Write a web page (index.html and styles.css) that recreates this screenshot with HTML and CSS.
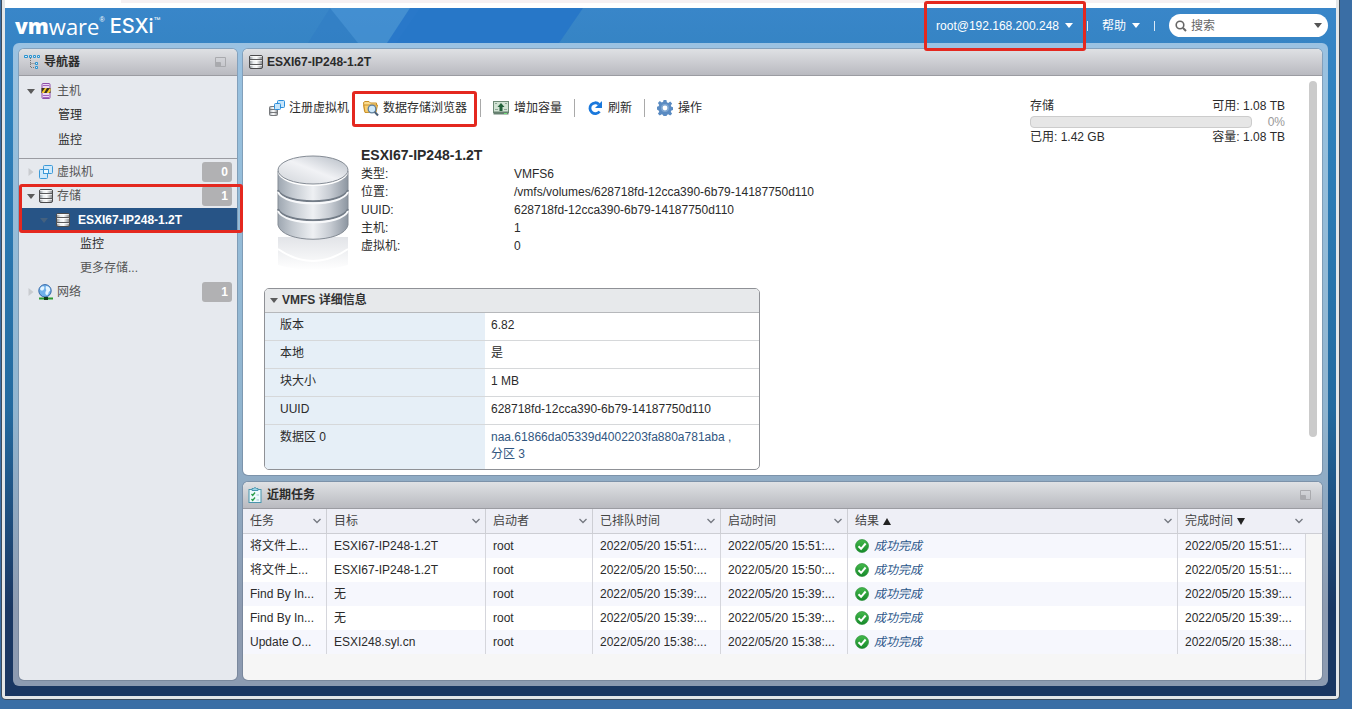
FILE: index.html
```html
<!DOCTYPE html>
<html lang="zh-CN">
<head>
<meta charset="utf-8">
<title>VMware ESXi</title>
<link rel="stylesheet" href="styles.css">
</head>
<body>
<svg class="defs" aria-hidden="true">
  <defs>
    <linearGradient id="metal"><stop offset="0" stop-color="#8b9096"/><stop offset=".3" stop-color="#e9ecee"/><stop offset=".55" stop-color="#fafafa"/><stop offset="1" stop-color="#85898e"/></linearGradient>
    <linearGradient id="steel"><stop offset="0" stop-color="#9ea7b1"/><stop offset=".2" stop-color="#c3c9d0"/><stop offset=".5" stop-color="#eef0f3"/><stop offset=".75" stop-color="#c5cad1"/><stop offset="1" stop-color="#8d96a1"/></linearGradient>
    <linearGradient id="lid" x1="0" y1="1" x2="1" y2="0"><stop offset="0" stop-color="#d0d4d9"/><stop offset=".5" stop-color="#f1f2f5"/><stop offset="1" stop-color="#b3bac3"/></linearGradient>
    <linearGradient id="mirror" x1="0" y1="0" x2="0" y2="1"><stop offset="0" stop-color="#e2e4e8"/><stop offset="1" stop-color="#ffffff"/></linearGradient>
    <linearGradient id="green" x1="0" y1="0" x2="0" y2="1"><stop offset="0" stop-color="#45b94c"/><stop offset="1" stop-color="#168a2a"/></linearGradient>
    <symbol id="i-disk" viewBox="0 0 16 16"><rect x="1.500" y="1.500" width="13" height="13" rx="1.500" fill="url(#metal)" stroke="#4b4b4d"/><path d="M1.500 5.500h13M1.500 10.500h13" stroke="#5b5b5d"/><path d="M2 2.500h12M2 6.500h12M2 11.500h12" stroke="#fff" stroke-opacity=".7"/></symbol>
    <symbol id="i-vm" viewBox="0 0 16 16"><g fill="#cfe9fb" stroke="#3d9ad8"><rect x="5.500" y="1.500" width="9" height="8" rx="1"/><rect x="1.500" y="5.500" width="8" height="9" rx="1"/><rect x="5.500" y="5.500" width="5" height="4" fill="#eff9ff"/></g></symbol>
    <symbol id="i-ok" viewBox="0 0 14 14"><circle cx="7" cy="7" r="6.500" fill="url(#green)" stroke="#178427" stroke-width=".6"/><path d="M3.500 7.200l2.600 2.600 4.500-5.300" fill="none" stroke="#fff" stroke-width="2"/></symbol>
    <symbol id="i-chev" viewBox="0 0 10 6"><path d="M1.500 1l3.500 3.500L8.500 1" fill="none" stroke="#747880" stroke-width="1.300"/></symbol>
    <symbol id="i-tri" viewBox="0 0 8 5"><path d="M0 0h8L4 5z" fill="currentColor"/></symbol>
    <symbol id="i-win" viewBox="0 0 11 10"><path d="M.5.500h10v9H.5zM.5 5.500h5v4" fill="none" stroke="#a9aaae"/><path d="M1 6h4v3H1z" fill="#a9aaae"/></symbol>
  </defs>
</svg>
<div class="window">
  <div class="browser-edge"></div>
  <div class="app">
    <header class="topbar">
      <svg class="facets" viewBox="0 0 600 35" width="600" height="35" aria-hidden="true">
        <path d="M320 0l-22 35h50z" fill="#2e78c2" opacity=".4"/><path d="M320 0h90l-24 35h-38z" fill="#4d98da" opacity=".5"/>
        <path d="M400 0l-23 35h172l24-35z" fill="#2474c8" opacity=".85"/>
      </svg>
      <h1 class="brand"><span class="brand-vm">vm</span><span class="brand-ware">ware</span><sup>®</sup><span class="brand-esxi">ESXi</span><sup>™</sup></h1>
      <div class="user-tools">
        <button class="top-button account" type="button">root@192.168.200.248<svg width="8" height="5"><use href="#i-tri"/></svg><span class="mark mark-account"></span></button>
        <span class="bar"></span>
        <button class="top-button" type="button">帮助<svg width="8" height="5"><use href="#i-tri"/></svg></button>
        <span class="bar"></span>
        <div class="search">
          <svg width="12" height="12" viewBox="0 0 12 12" aria-hidden="true"><circle cx="5" cy="5" r="3.800" fill="none" stroke="#666" stroke-width="1.600"/><path d="M8 8l3 3" stroke="#666" stroke-width="2"/></svg>
          <input type="text" placeholder="搜索" aria-label="搜索">
          <svg width="8" height="5" aria-hidden="true"><use href="#i-tri"/></svg>
        </div>
      </div>
    </header>
    <div class="shell">
      <nav class="panel nav">
        <div class="panel-head">
          <svg width="17" height="16" viewBox="0 0 17 16" aria-hidden="true"><g fill="#d7effc" stroke="#2d93cf"><path d="M.5 1.500h3v2h-3zM5.500 1.500h2v2h-2zM9.500 1.500h2v2h-2zM13.500 1.500h2v2h-2zM11.500 8.500h2v2h-2zM11.500 12.500h2v2h-2z"/></g><path d="M6.500 4v9.500H11M6.500 9.500H11" fill="none" stroke="#777" stroke-dasharray="1 1"/></svg>
          <h2>导航器</h2>
          <button class="win-button" type="button" aria-label="收起"><svg width="11" height="10"><use href="#i-win"/></svg></button>
        </div>
        <ul class="tree host-tree">
          <li><a class="node" href="#"><svg class="caret" width="8" height="5"><use href="#i-tri"/></svg>
            <svg width="16" height="16" viewBox="0 0 16 16"><rect x="4" y=".5" width="8" height="15" rx="1" fill="#ead7f2" stroke="#8e4fa8"/><path d="M5 2.500h6M5 12.500h6M5 14.500h6" stroke="#a565bd"/><path d="M3.500 5h9v5h-9z" fill="#3a3222"/><path d="M4 9l3-4h2L6 10H4zM8.500 10l3-4.500h1V8L11 10z" fill="#f4c928"/></svg>
            <span>主机</span></a></li>
          <li><a class="leaf" href="#">管理</a></li>
          <li><a class="leaf" href="#">监控</a></li>
        </ul>
        <ul class="tree object-tree">
          <li><a class="node" href="#"><svg class="caret faint" width="5" height="8" viewBox="0 0 5 8"><path d="M0 0v8l5-4z" fill="currentColor"/></svg><svg width="16" height="16"><use href="#i-vm"/></svg><span>虚拟机</span><b class="count">0</b></a></li>
          <li class="storage">
            <a class="node" href="#"><svg class="caret" width="8" height="5"><use href="#i-tri"/></svg><svg width="16" height="16"><use href="#i-disk"/></svg><span>存储</span><b class="count">1</b></a>
            <a class="node selected" href="#"><svg class="caret" width="8" height="5"><use href="#i-tri"/></svg><svg width="16" height="16"><use href="#i-disk"/></svg><span>ESXI67-IP248-1.2T</span></a>
            <span class="mark mark-storage"></span>
          </li>
          <li><a class="leaf deep" href="#">监控</a></li>
          <li><a class="leaf deep more" href="#">更多存储...</a></li>
          <li><a class="node" href="#"><svg class="caret faint" width="5" height="8" viewBox="0 0 5 8"><path d="M0 0v8l5-4z" fill="currentColor"/></svg><svg width="16" height="16" viewBox="0 0 16 16"><circle cx="7" cy="6.800" r="6.200" fill="#6fb0ea" stroke="#3467a8"/><path d="M3 3c3-2 4 0 3 2S3 7 2 5zM8 2c3 0 5 3 4 5-2 0-1 4-3 4S7 8 8 7s-1-2 0-5z" fill="#e3f4ff"/><path d="M1 14.500h14" stroke="#2b9b32" stroke-width="2"/><path d="M6 14.500h4" stroke="#123f18" stroke-width="3"/></svg><span>网络</span><b class="count">1</b></a></li>
        </ul>
      </nav>
      <div class="workspace">
        <main class="panel detail">
          <div class="panel-head"><svg width="16" height="16"><use href="#i-disk"/></svg><h2>ESXI67-IP248-1.2T</h2></div>
          <div class="detail-body">
            <div class="detail-top">
              <div class="toolbar">
                <button type="button"><svg width="16" height="18" viewBox="0 0 16 18"><rect x=".5" y="7.500" width="8" height="9" rx="1" fill="url(#metal)" stroke="#77797c"/><path d="M1 10.500h7M1 13.500h7" stroke="#77797c"/><g fill="#c6e5fb" stroke="#2c8edb"><rect x="8.500" y="1.500" width="7" height="7" rx="1"/><rect x="5.500" y="4.500" width="6" height="6" rx="1"/></g></svg>注册虚拟机</button>
                <button class="browse" type="button"><svg width="16" height="18" viewBox="0 0 16 18"><path d="M1.500 12.500l-1-9 1.500-1h4l1.500 1.500h6v2" fill="#fbdc8e" stroke="#c98f25"/><path d="M2 13.500L.8 6h13.700l-1.500 7z" fill="#f9cf72" stroke="#c98f25"/><circle cx="9" cy="10" r="3.800" fill="#cfe9fb" stroke="#5e7f9e" stroke-width="1.300"/><path d="M11.800 13l3.200 3.500" stroke="#4b5f75" stroke-width="2"/></svg>数据存储浏览器<span class="mark mark-browse"></span></button>
                <button class="divided" type="button"><svg width="16" height="16" viewBox="0 0 16 16"><rect x=".5" y="1.500" width="15" height="11" fill="#d2e3d4" stroke="#6d8a76"/><path d="M.5 11.500h15v3H.5z" fill="#668070"/><path d="M8 3l3.500 4h-2v4h-3V7h-2z" fill="#22613a"/><path d="M2 3.500h2m8 0h2M2 9.500h3m6 0h3" stroke="#8ca896"/><path d="M11 13.500h3" stroke="#6fe078"/></svg>增加容量</button>
                <button class="divided" type="button"><svg width="16" height="16" viewBox="0 0 16 16"><path d="M12 4.200A5.400 5.400 0 1 0 12.600 11.500" fill="none" stroke="#1a78dc" stroke-width="2.800"/><path d="M15 1v7H8z" fill="#1a78dc"/></svg>刷新</button>
                <button class="divided" type="button"><svg width="16" height="16" viewBox="0 0 16 16"><path d="M6.600 0h2.800l.5 2.300 1.300.6 2-1.300 1.900 1.900-1.300 2 .6 1.300 2.100.5v2.600l-2.100.5-.6 1.300 1.300 2-1.900 1.900-2-1.300-1.300.6-.5 2.100H6.600l-.5-2.100-1.300-.6-2 1.300-1.900-1.900 1.300-2-.6-1.300L0 9.400V6.800l1.600-.5.6-1.300-1.300-2 1.900-1.900 2 1.300 1.300-.6z" fill="#5a8bc2"/><circle cx="8" cy="8" r="4" fill="#7fa7d2"/><circle cx="8" cy="8" r="2.400" fill="#fff"/></svg>操作</button>
              </div>
              <section class="capacity">
                <div class="cap-line"><span>存储</span><span>可用: 1.08 TB</span></div>
                <div class="cap-meter"><div class="track"></div><span>0%</span></div>
                <div class="cap-line"><span>已用: 1.42 GB</span><span>容量: 1.08 TB</span></div>
              </section>
            </div>
            <section class="summary">
              <svg width="72" height="114" viewBox="0 0 72 114" aria-hidden="true">
                <path d="M1 82v28q35 10 70 0V82z" fill="url(#mirror)"/><path d="M1 94q35 24 70 0" fill="none" stroke="#fff" stroke-width="2"/>
                <path d="M1 16v54c4 19 66 19 70 0V16z" fill="url(#steel)" stroke="#858c95"/>
                <path d="M1 35c6 15 64 15 70 0M1 54c6 15 64 15 70 0" fill="none" stroke="#737c87" stroke-width="2"/>
                <path d="M1 37c6 15 64 15 70 0M1 56c6 15 64 15 70 0" fill="none" stroke="#f8f9fb" stroke-width="2"/>
                <ellipse cx="36" cy="17" rx="35" ry="14" fill="#fff"/><ellipse cx="36" cy="15" rx="35" ry="14" fill="url(#lid)" stroke="#858c95"/>
              </svg>
              <div class="facts-box">
                <h3>ESXI67-IP248-1.2T</h3>
                <dl class="facts">
                  <dt>类型:</dt><dd>VMFS6</dd>
                  <dt>位置:</dt><dd>/vmfs/volumes/628718fd-12cca390-6b79-14187750d110</dd>
                  <dt>UUID:</dt><dd>628718fd-12cca390-6b79-14187750d110</dd>
                  <dt>主机:</dt><dd>1</dd>
                  <dt>虚拟机:</dt><dd>0</dd>
                </dl>
              </div>
            </section>
            <section class="card">
              <h3><button type="button"><svg width="8" height="5"><use href="#i-tri"/></svg>VMFS 详细信息</button></h3>
              <table>
                <tr><th scope="row">版本</th><td>6.82</td></tr>
                <tr><th scope="row">本地</th><td>是</td></tr>
                <tr><th scope="row">块大小</th><td>1 MB</td></tr>
                <tr><th scope="row">UUID</th><td>628718fd-12cca390-6b79-14187750d110</td></tr>
                <tr><th scope="row">数据区 0</th><td><a href="#">naa.61866da05339d4002203fa880a781aba ,<br>分区 3</a></td></tr>
              </table>
            </section>
            <div class="scroll-thumb"></div>
          </div>
        </main>
        <section class="panel tasks">
          <div class="panel-head">
            <svg width="14" height="16" viewBox="0 0 14 16" aria-hidden="true"><rect x="1" y="2.500" width="12" height="13" fill="#eefafd" stroke="#4995ad"/><path d="M4 3.500V1.500h1.500L7 .5l1.500 1H10v2z" fill="#9cd7ea" stroke="#4995ad"/><path d="M3.500 7l1.200 1.500L7 5.500M3.500 12l1.200 1.500L7 10.500" fill="none" stroke="#279c47" stroke-width="1.300"/><path d="M8.500 8h2.500M8.500 13h2.500" stroke="#9fc3cf"/></svg>
            <h2>近期任务</h2>
            <button class="win-button" type="button" aria-label="还原"><svg width="11" height="10"><use href="#i-win"/></svg></button>
          </div>
          <table class="grid">
            <colgroup><col class="c-task"><col class="c-target"><col class="c-user"><col class="c-queue"><col class="c-start"><col><col class="c-done"><col class="c-gutter"></colgroup>
            <thead><tr>
              <th><button type="button">任务<svg width="10" height="6"><use href="#i-chev"/></svg></button></th>
              <th><button type="button">目标<svg width="10" height="6"><use href="#i-chev"/></svg></button></th>
              <th><button type="button">启动者<svg width="10" height="6"><use href="#i-chev"/></svg></button></th>
              <th><button type="button">已排队时间<svg width="10" height="6"><use href="#i-chev"/></svg></button></th>
              <th><button type="button">启动时间<svg width="10" height="6"><use href="#i-chev"/></svg></button></th>
              <th><button type="button">结果<i class="sort up"></i><svg width="10" height="6"><use href="#i-chev"/></svg></button></th>
              <th colspan="2" class="last"><button type="button">完成时间<i class="sort down"></i><svg width="10" height="6"><use href="#i-chev"/></svg></button></th>
            </tr></thead>
            <tbody>
              <tr><td>将文件上...</td><td>ESXI67-IP248-1.2T</td><td>root</td><td>2022/05/20 15:51:...</td><td>2022/05/20 15:51:...</td><td><span class="result"><svg width="14" height="14"><use href="#i-ok"/></svg><em>成功完成</em></span></td><td>2022/05/20 15:51:...</td><td class="gutter"></td></tr>
              <tr><td>将文件上...</td><td>ESXI67-IP248-1.2T</td><td>root</td><td>2022/05/20 15:50:...</td><td>2022/05/20 15:50:...</td><td><span class="result"><svg width="14" height="14"><use href="#i-ok"/></svg><em>成功完成</em></span></td><td>2022/05/20 15:51:...</td><td class="gutter"></td></tr>
              <tr><td>Find By In...</td><td>无</td><td>root</td><td>2022/05/20 15:39:...</td><td>2022/05/20 15:39:...</td><td><span class="result"><svg width="14" height="14"><use href="#i-ok"/></svg><em>成功完成</em></span></td><td>2022/05/20 15:39:...</td><td class="gutter"></td></tr>
              <tr><td>Find By In...</td><td>无</td><td>root</td><td>2022/05/20 15:39:...</td><td>2022/05/20 15:39:...</td><td><span class="result"><svg width="14" height="14"><use href="#i-ok"/></svg><em>成功完成</em></span></td><td>2022/05/20 15:39:...</td><td class="gutter"></td></tr>
              <tr><td>Update O...</td><td>ESXI248.syl.cn</td><td>root</td><td>2022/05/20 15:38:...</td><td>2022/05/20 15:38:...</td><td><span class="result"><svg width="14" height="14"><use href="#i-ok"/></svg><em>成功完成</em></span></td><td>2022/05/20 15:38:...</td><td class="gutter"></td></tr>
            </tbody>
          </table>
          <div class="rest"><div class="rest-gutter"></div></div>
        </section>
      </div>
    </div>
  </div>
</div>
</body>
</html>
```
FILE: styles.css
```css
* { box-sizing: border-box; }
html, body { height: 100%; }
body {
  margin: 0;
  padding: 0 13px 10px 2px;
  background: #3a6ea5;
  font: 12px/18px "Liberation Sans", "Noto Sans CJK SC", sans-serif;
  color: #2b2b2b;
}
h1, h2, h3, ul, dl, dd { margin: 0; padding: 0; }
ul { list-style: none; }
a { color: inherit; text-decoration: none; }
button { margin: 0; padding: 0; border: 0; background: none; font: inherit; color: inherit; }
svg { display: block; flex: none; }
.defs { position: absolute; width: 0; height: 0; }

.window {
  display: flex;
  flex-direction: column;
  height: 100%;
  min-height: 600px;
  border: solid #e3e6e8;
  border-width: 0 3px 3px;
  border-radius: 0 0 4px 4px;
  background: #fff;
  box-shadow: 0 0 0 1px #3d4c5c;
}
.browser-edge { height: 8px; margin: 0 116px; background: linear-gradient(#f6f0f2 3px, #fff 3px); }
.app {
  flex: 1;
  display: flex;
  flex-direction: column;
  min-height: 0;
  padding: 0 8px 10px;
  background: linear-gradient(#3986c9 0, #2f81bc 100px, #236a9f 400px, #1a3762 600px);
}

.topbar { position: relative; display: flex; align-items: center; height: 35px; padding-left: 2px; color: #fff; }
.facets { position: absolute; left: -3px; top: 0; }
.brand { position: relative; display: flex; align-items: center; height: 34px; line-height: 34px; font-weight: 400; }
.brand-vm { font-family: "Open Sans", sans-serif; font-size: 21px; font-weight: 800; }
.brand-ware { font-family: "Open Sans", sans-serif; font-size: 22px; }
.brand-esxi { margin-left: 5px; font-family: Inter, sans-serif; font-size: 20px; font-weight: 500; }
.brand sup { align-self: flex-start; font-size: 7px; line-height: 22px; }
.user-tools { display: flex; align-items: center; gap: 14px; margin-left: auto; }
.top-button { position: relative; display: flex; align-items: center; gap: 6px; white-space: nowrap; }
.bar { width: 1px; height: 10px; background: #dbe9f7; }
.search {
  display: flex;
  align-items: center;
  gap: 4px;
  width: 159px;
  height: 23px;
  padding: 0 6px;
  border-radius: 12px;
  background: #fff;
  color: #555;
}
.search input { flex: 1; min-width: 0; padding: 0; border: 0; outline: 0; background: none; font: inherit; color: #444; }
.search input::placeholder { color: #666; opacity: 1; }

.mark { position: absolute; z-index: 2; border: 3px solid #e4281f; border-radius: 3px; pointer-events: none; }
.mark-account { inset: -16px -13px -16px -12px; }
.mark-browse { inset: -8px -10px -10px -11px; }
.mark-storage { inset: 0 -6px -1px 0; }

.shell {
  flex: 1;
  display: flex;
  gap: 6px;
  min-height: 0;
  padding: 6px;
  border-radius: 6px;
  background: rgba(255, 255, 255, .5);
}
.panel { display: flex; flex-direction: column; border-radius: 5px; box-shadow: 0 0 0 1px rgba(90, 100, 120, .35); background: #fff; }
.panel-head {
  display: flex;
  flex: none;
  align-items: center;
  gap: 3px;
  height: 27px;
  padding: 0 5px;
  border-bottom: 1px solid #9b9ca2;
  border-radius: 5px 5px 0 0;
  background: linear-gradient(#dfe1e4, #b9bac0);
}
.panel-head h2 { font-size: 12px; font-weight: 700; line-height: 18px; }
.tasks .panel-head { gap: 5px; }
.win-button { margin: 0 6px 0 auto; }

.nav { width: 218px; flex: none; background: #e6e9ee; }
.tree { display: flex; flex-direction: column; }
.host-tree { padding: 3px 0 6px; border-bottom: 1px solid #9b9ca2; }
.object-tree { padding-top: 1px; }
.node { display: flex; align-items: center; gap: 3px; height: 24px; padding: 0 5px 0 8px; color: #555; }
.caret { width: 8px; color: #5b5b5b; }
.faint { color: #c9ccd0; }
.leaf { display: flex; align-items: center; height: 24px; padding-left: 39px; }
.host-tree li:last-child { padding-top: 1px; }
.deep { padding-left: 61px; }
.more { color: #555; }
.count { width: 30px; height: 20px; margin-left: auto; padding-right: 4px; border-radius: 3px; background: #b1b1b3; color: #fff; line-height: 20px; text-align: right; }
.storage { position: relative; }
.selected { gap: 7px; margin-left: 3px; padding-left: 18px; background: #275486; color: #fff; font-weight: 700; }
.selected .caret { color: #44617f; }

.workspace { flex: 1; display: flex; flex-direction: column; gap: 7px; min-width: 0; }
.detail { flex: 1; min-height: 0; }
.detail-body { position: relative; flex: 1; min-height: 0; padding: 21px 37px 0 21px; overflow: hidden; }
.detail-top { display: flex; justify-content: space-between; align-items: flex-start; height: 49px; }
.toolbar { display: flex; align-items: center; padding: 2px 0 0 5px; }
.toolbar button { position: relative; display: flex; align-items: center; gap: 4px; white-space: nowrap; }
.toolbar .browse { margin: 0 13px 0 14px; }
.toolbar .divided { gap: 5px; padding-left: 13px; margin-right: 12px; }
.toolbar .divided::before { content: ""; position: absolute; left: 0; top: 0; width: 1px; height: 18px; background: #a9a9a9; }
.capacity { width: 255px; }
.cap-line { display: flex; justify-content: space-between; height: 18px; }
.cap-meter { display: flex; align-items: center; gap: 16px; height: 13px; color: #999; }
.track { flex: 1; height: 12px; border: 1px solid #ccc; border-radius: 4px; background: #e6e6e6; }

.summary { display: flex; gap: 12px; height: 142px; padding: 9px 0 0 13px; }
.facts-box { margin-top: -10px; }
.facts-box h3 { font-size: 14px; line-height: 20px; }
.facts { display: grid; grid-template-columns: 153px auto; line-height: 18px; }

.card { width: 496px; border: 1px solid #8f9196; border-radius: 5px; overflow: hidden; }
.card h3 { height: 24px; border-bottom: 1px solid #b6b8bb; background: #e7e9eb; font-size: 12px; line-height: 23px; }
.card h3 button { display: flex; align-items: center; gap: 4px; padding-left: 5px; font-weight: 700; color: #333; }
.card h3 svg { color: #5b5b5b; }
.card table { width: 100%; border-collapse: separate; border-spacing: 0; line-height: 17px; }
.card th { width: 220px; padding: 4px 15px; background: #e6eff7; font-weight: 400; text-align: left; vertical-align: top; }
.card td { padding: 4px 6px; vertical-align: top; }
.card th, .card td { height: 28px; border-bottom: 1px solid #d6d8da; }
.card tr:last-child > * { height: 44px; border-bottom: 0; }
.card a { color: #31567f; }
.scroll-thumb { position: absolute; top: 5px; right: 5px; width: 8px; height: 356px; border-radius: 4px; background: #cbcbcb; }

.tasks { flex: none; height: 198px; background: #f6f6f6; overflow: hidden; }
.grid { width: 100%; table-layout: fixed; border-collapse: separate; border-spacing: 0; }
.c-task { width: 84px; }
.c-target { width: 159px; }
.c-user { width: 107px; }
.c-queue { width: 128px; }
.c-start { width: 127px; }
.c-done { width: 128px; }
.c-gutter { width: 16px; }
.grid th { height: 25px; padding: 0; border-right: 1px solid #cdced4; border-bottom: 1px solid #cdced4; background: #eeeff6; font-weight: 400; color: #454545; }
.grid th.last { border-right: 0; }
.grid th button { display: flex; align-items: center; width: 100%; padding: 0 4px 0 7px; }
.grid th svg { margin-left: auto; }
.grid th.last button { padding-right: 18px; }
.sort { margin-left: 4px; border: solid transparent; border-width: 0 4px; }
.up { border-bottom: 7px solid #222; }
.down { border-top: 7px solid #222; }
.grid td { height: 24px; padding: 0 7px; border-right: 1px solid #d5d6dc; background: #fff; white-space: nowrap; overflow: hidden; }
.grid tbody tr:nth-child(odd) td { background: #f6f7fd; }
.grid tbody td.gutter { border-right: 0; padding: 0; background: #f6f6f6; }
.grid tbody tr:nth-child(odd) td.gutter { background: #f6f6f6; }
.result { display: flex; align-items: center; gap: 5px; color: #2b568a; }
.rest { flex: 1; display: flex; justify-content: flex-end; }
.rest-gutter { width: 17px; border-left: 1px solid #d5d6dc; }
```
